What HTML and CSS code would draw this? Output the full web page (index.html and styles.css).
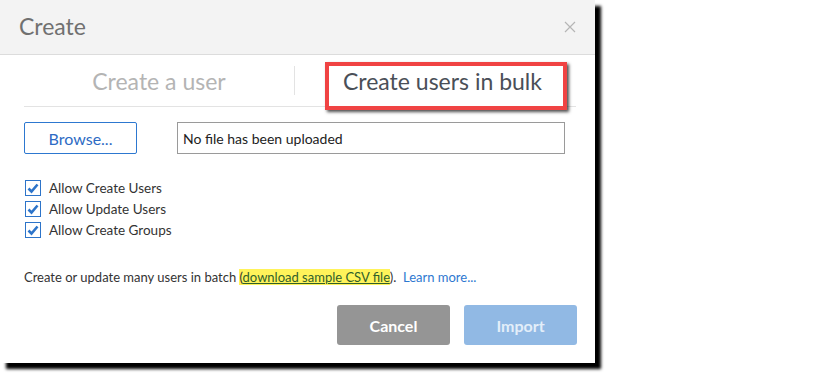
FILE: index.html
```html
<!DOCTYPE html>
<html>
<head>
<meta charset="utf-8">
<link rel="stylesheet" href="styles.css">
</head>
<body>
<div class="dialog">
  <div class="header">
    <span class="title">Create</span>
    <svg class="close" width="12" height="12" viewBox="0 0 12 12"><path d="M1 1L11 11M11 1L1 11" stroke="#b5b5b5" stroke-width="1.2" fill="none"/></svg>
  </div>
  <div class="tabs">
    <div class="tab tab-off">Create a user</div>
    <div class="tab-sep"></div>
    <div class="tab tab-on">Create users in bulk</div>
    <div class="callout"></div>
  </div>
  <div class="body">
    <div class="file-row">
      <button class="browse">Browse...</button>
      <div class="file-field">No file has been uploaded</div>
    </div>
    <div class="checks">
      <label class="check"><span class="box"><svg width="14" height="14" viewBox="0 0 14 14"><path d="M2.5 7.5L5.5 10.5L11.5 3.5" stroke="#2d74c9" stroke-width="2.6" fill="none"/></svg></span>Allow Create Users</label>
      <label class="check"><span class="box"><svg width="14" height="14" viewBox="0 0 14 14"><path d="M2.5 7.5L5.5 10.5L11.5 3.5" stroke="#2d74c9" stroke-width="2.6" fill="none"/></svg></span>Allow Update Users</label>
      <label class="check"><span class="box"><svg width="14" height="14" viewBox="0 0 14 14"><path d="M2.5 7.5L5.5 10.5L11.5 3.5" stroke="#2d74c9" stroke-width="2.6" fill="none"/></svg></span>Allow Create Groups</label>
    </div>
    <p class="note">Create or update many users in batch <span class="hl">(<a class="csv">download sample CSV file</a></span>).&nbsp; <a class="learn">Learn more...</a></p>
    <div class="actions">
      <button class="btn cancel">Cancel</button>
      <button class="btn import">Import</button>
    </div>
  </div>
</div>
</body>
</html>
```
FILE: styles.css
```css
html, body {
  margin: 0;
  padding: 0;
  background: #fff;
}
body {
  font-family: Lato, "Noto Sans", sans-serif;
  color: #333;
  min-height: 373px;
  width: 830px;
}
.dialog {
  position: relative;
  width: 595px;
  height: 363px;
  background: #fff;
  box-shadow: 6px 6px 3px #000;
}
.header {
  height: 54px;
  background: #f3f3f3;
  border-bottom: 1px solid #dcdcdc;
  display: flex;
  align-items: center;
  justify-content: space-between;
  padding: 0 19px 0 19px;
}
.title {
  font-size: 23px;
  color: #707070;
  font-weight: 400;
  margin-top: -2px;
}
.tabs {
  position: relative;
  margin: 0 19px 0 24px;
  height: 51px;
  border-bottom: 1px solid #e3e3e3;
  display: flex;
  align-items: center;
}
.tab {
  font-size: 23px;
  font-weight: 400;
  text-align: center;
}
.tab-off {
  width: 270px;
  color: #b4b4b4;
}
.tab-sep {
  width: 1px;
  height: 29px;
  background: #e3e3e3;
}
.tab-on {
  flex: 1;
  color: #4a4f58;
  padding-left: 14px;
}
.callout {
  position: absolute;
  left: 301px;
  top: 7px;
  width: 234px;
  height: 40px;
  border: 4px solid #f04343;
  box-shadow: 2px 2px 3px rgba(0,0,0,0.7);
}
.body {
  padding: 15px 18px 0 24px;
}
.file-row {
  display: flex;
  align-items: center;
  gap: 40px;
}
.browse {
  width: 113px;
  height: 32px;
  border: 1px solid #2d78d0;
  border-radius: 2px;
  background: #fff;
  color: #2d6bc4;
  font-family: Lato, "Noto Sans", sans-serif;
  font-size: 16px;
  padding: 0;
}
.file-field {
  width: 381px;
  height: 30px;
  border: 1px solid #9a9a9a;
  display: flex;
  align-items: center;
  padding-left: 5px;
  font-size: 14px;
  color: #222;
}
.checks {
  margin-top: 26px;
  display: flex;
  flex-direction: column;
  gap: 5px;
}
.check {
  display: flex;
  align-items: center;
  font-size: 13.5px;
  color: #333;
  height: 16px;
}
.box {
  width: 14px;
  height: 14px;
  border: 1px solid #2d74c9;
  margin: 0 8px 0 1px;
  display: flex;
}
.note {
  margin: 31px 0 0 0;
  font-size: 13px;
  color: #333;
}
.hl {
  background: #fff35a;
}
.csv {
  color: #2f5f2a;
  text-decoration: underline;
}
.learn {
  color: #2d78d0;
}
.actions {
  display: flex;
  justify-content: flex-end;
  gap: 14px;
  margin-top: 20px;
}
.btn {
  width: 113px;
  height: 40px;
  border: none;
  border-radius: 3px;
  font-family: Lato, "Noto Sans", sans-serif;
  font-size: 16px;
  font-weight: 700;
  padding: 0;
}
.cancel {
  background: #959595;
  color: #fff;
}
.import {
  background: #91b9e4;
  color: #e3eef9;
}
```
